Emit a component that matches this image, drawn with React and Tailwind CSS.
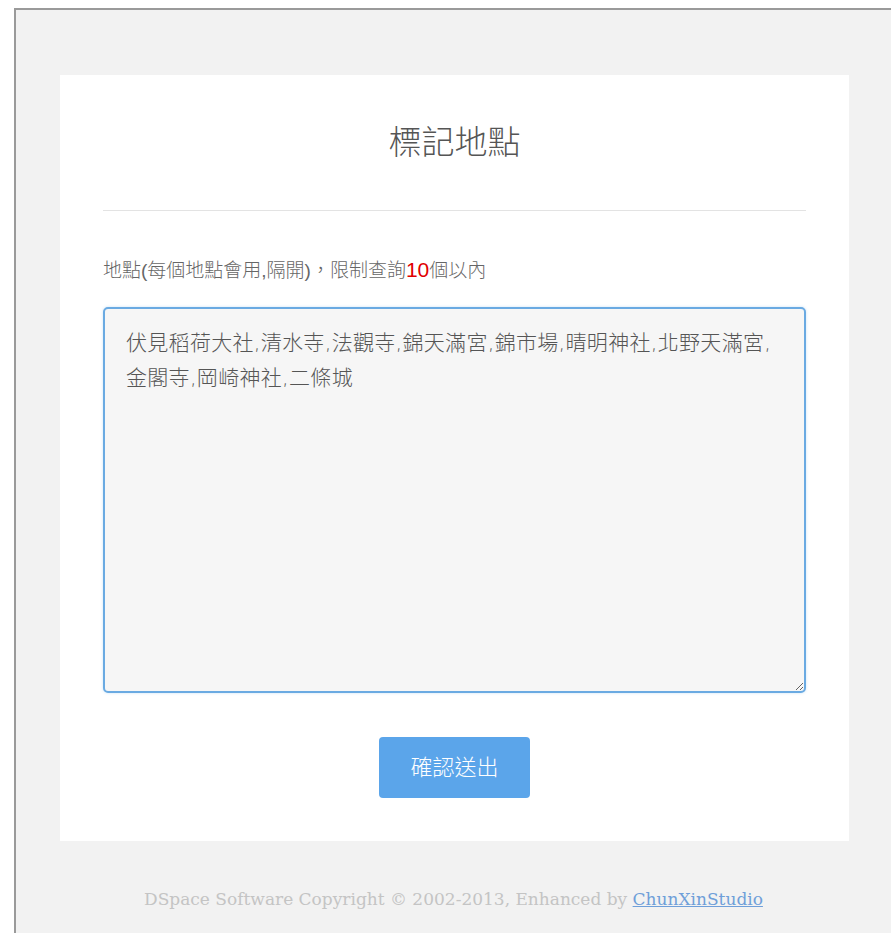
import { useEffect, useRef } from "react";

export default function App() {
  const cjk = { fontFamily: '"Liberation Sans", "Noto Sans CJK TC", sans-serif' };
  const taFont = { fontFamily: '"DejaVu Sans", "Noto Sans CJK TC", sans-serif', letterSpacing: "0.3px" };
  const text =
    "伏見稻荷大社,清水寺,法觀寺,錦天滿宮,錦市場,晴明神社,北野天滿宮,金閣寺,岡崎神社,二條城";
  const ref = useRef(null);
  useEffect(() => {
    const el = ref.current;
    if (el) {
      el.focus();
      el.setSelectionRange(text.length, text.length);
    }
  }, []);
  return (
    <div className="min-h-screen bg-white pt-[8px] pl-[14px]">
      <div className="w-[877px] min-h-[925px] border-t-2 border-l-2 border-[#9a9a9a] bg-[#f2f2f2] pt-[65px]">
        <div
          className="ml-[44px] w-[789px] bg-white px-[43px] pt-[46px] pb-[43px] text-[#555]"
          style={cjk}
        >
          <h1 className="text-center text-[33px] leading-[44px] font-light text-[#555]">標記地點</h1>
          <div className="mt-[45px] h-px bg-[#e3e3e3]" />
          <p className="mt-[47px] text-[19px] leading-[24px] text-[#666] font-light">
            地點(每個地點會用,隔開)，限制查詢
            <span className="text-[21px] text-[#e00000]">10</span>
            個以內
          </p>
          <textarea
            ref={ref}
            className="mt-[24px] block h-[386px] w-full resize-y rounded-[5px] border-2 border-[#6aaae2] bg-[#f6f6f6] pl-[21px] pr-[23px] py-[17px] text-[21px] leading-[35px] font-light text-[#555] caret-[#333] shadow-[0_0_3px_rgba(102,175,233,0.35)] outline-none"
            style={taFont}
            defaultValue={text}
          />
          <div className="mt-[44px] flex justify-center">
            <button className="h-[61px] w-[151px] rounded-[4px] bg-[#5ba5ea] text-[22px] font-light text-white">
              確認送出
            </button>
          </div>
        </div>
        <p
          className="mt-[46px] text-center text-[17px] leading-[24px] text-[#c4c4c4]"
          style={{ fontFamily: '"DejaVu Serif", serif' }}
        >
          DSpace Software Copyright © 2002-2013, Enhanced by{" "}
          <a className="text-[#6f9fd9] underline">ChunXinStudio</a>
        </p>
      </div>
    </div>
  );
}
